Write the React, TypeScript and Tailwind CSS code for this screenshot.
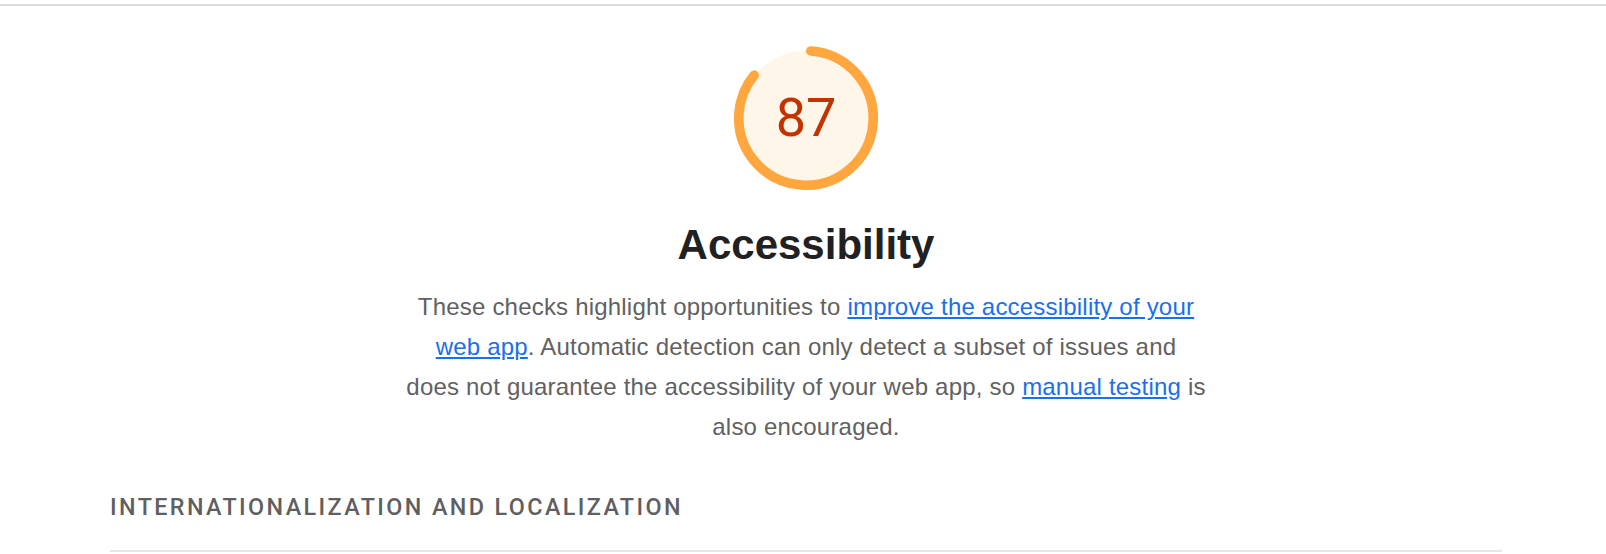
import React from "react";

function Gauge({ score }: { score: number }) {
  const r = 56;
  const sw = 8;
  const circ = 2 * Math.PI * r;
  const gap = Math.ceil(sw / 2);
  const rot = -90 + (gap / circ) * 360;
  const len = score * circ - gap * 2;
  return (
    <div className="relative w-[144px] h-[144px]">
      <svg viewBox="0 0 120 120" className="w-[144px] h-[144px]">
        <circle cx="60" cy="60" r={r} fill="#fff6ea" stroke="none" />
        <circle
          cx="60"
          cy="60"
          r={r}
          fill="none"
          stroke="#ffa63e"
          strokeWidth={sw}
          strokeLinecap="round"
          strokeDasharray={`${len} ${circ}`}
          transform={`rotate(${rot} 60 60)`}
        />
      </svg>
      <div className="absolute inset-0 flex items-center justify-center">
        <span
          className="text-[#c33300] text-[54px] leading-none"
          style={{ fontFamily: "Roboto, 'Liberation Sans', sans-serif" }}
        >
          87
        </span>
      </div>
    </div>
  );
}

export default function App() {
  return (
    <div
      className="w-[1606px] h-[554px] bg-white overflow-hidden pt-[4px]"
      style={{ fontFamily: "'Liberation Sans', Arial, sans-serif" }}
    >
      <div className="h-[2px] bg-[#dcdcdc]" />
      <div className="pl-[110px] pr-[104px]">
        <div className="flex flex-col items-center">
          <div className="mt-[40px]">
            <Gauge score={0.87} />
          </div>
          <h1 className="mt-[31px] text-[42px] leading-[48px] font-bold text-[#212121]">
            Accessibility
          </h1>
          <p className="mt-[18px] max-w-[900px] text-center text-[24px] tracking-[0.2px] leading-[40px] text-[#616161]">
            These checks highlight opportunities to{" "}
            <a className="text-[#1a6ff0] underline" href="#">
              improve the accessibility of your
              <br />
              web app
            </a>
            . Automatic detection can only detect a subset of issues and
            <br />
            does not guarantee the accessibility of your web app, so{" "}
            <a className="text-[#1a6ff0] underline" href="#">
              manual testing
            </a>{" "}
            is
            <br />
            also encouraged.
          </p>
        </div>
        <div
          className="mt-[40px] text-[23.33px] leading-[40px] font-medium uppercase tracking-[2.4px] text-[#5f5f5f]"
          style={{ fontFamily: "Roboto, 'Liberation Sans', sans-serif" }}
        >
          Internationalization and Localization
        </div>
        <div className="mt-[23px] h-[2px] bg-[#e6e6e6]" />
      </div>
    </div>
  );
}
